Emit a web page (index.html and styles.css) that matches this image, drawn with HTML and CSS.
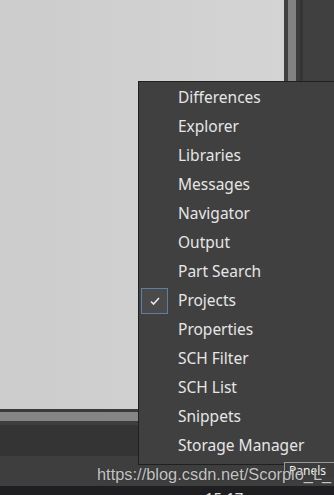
FILE: index.html
```html
<!DOCTYPE html>
<html lang="en">
<head>
    <meta charset="UTF-8">
    <title>Panels menu</title>
    <link rel="stylesheet" href="styles.css">
</head>
<body>
    <div class="screen">
        <div class="workspace">
            <div class="canvas"></div>
            <div class="strip">
                <span class="seg seg-a"></span>
                <span class="seg seg-b"></span>
                <span class="seg seg-c"></span>
                <span class="seg seg-d"></span>
                <span class="seg seg-e"></span>
            </div>
        </div>
        <div class="hscroll"></div>
        <div class="bar bar-a"></div>
        <div class="bar bar-b"></div>
        <div class="bar bar-c"></div>
        <div class="taskbar"><span class="clock">15:17</span></div>

        <ul class="menu">
            <li class="item">Differences</li>
            <li class="item">Explorer</li>
            <li class="item">Libraries</li>
            <li class="item">Messages</li>
            <li class="item">Navigator</li>
            <li class="item">Output</li>
            <li class="item">Part Search</li>
            <li class="item checked">
                <span class="check">
                    <svg width="12" height="10" viewBox="0 0 12 10"><path d="M2 5.5 L4.5 8 L10 2" fill="none" stroke="#e8e8e8" stroke-width="1.6"/></svg>
                </span>
                Projects
            </li>
            <li class="item">Properties</li>
            <li class="item">SCH Filter</li>
            <li class="item">SCH List</li>
            <li class="item">Snippets</li>
            <li class="item">Storage Manager</li>
        </ul>

        <div class="tooltip">Panels</div>
        <div class="watermark">https://blog.csdn.net/Scorpio_L_</div>
    </div>
</body>
</html>
```

FILE: styles.css
```css
body {
    margin: 0;
    background: #404040;
}

.screen {
    position: relative;
    width: 334px;
    height: 495px;
    overflow: hidden;
}

.workspace {
    display: flex;
    height: 409px;
}

.canvas {
    flex: 1;
    background: linear-gradient(to right, #cccccc, #d4d4d4);
}

.strip {
    display: flex;
    width: 50px;
}

.seg {
    display: block;
}

.seg-a { width: 4px; background: #404040; }
.seg-b { width: 8px; background: #828282; }
.seg-c { width: 4px; background: #3c3c3c; }
.seg-d { width: 3px; background: #353535; }
.seg-e { flex: 1; background: #404040; }

.hscroll {
    height: 3px;
    background: #3a3a3a;
}

.bar-a {
    height: 9px;
    background: #858585;
}

.bar-b {
    height: 31px;
    background: #343434;
    border-top: 4px solid #3e3e3e;
}

.bar-c {
    height: 30px;
    background: #3e3e3e;
}

.taskbar {
    height: 13px;
    background: #1f1f22;
    position: relative;
}

.clock {
    position: absolute;
    left: 205px;
    top: 3px;
    color: #e0e0e0;
    font-family: "Noto Sans", sans-serif;
    font-size: 15px;
    line-height: 16px;
}

.menu {
    position: absolute;
    left: 138px;
    top: 81px;
    width: 200px;
    margin: 0;
    padding: 1px 0 4px 0;
    list-style: none;
    background: #404040;
    border: 1px solid #202020;
    font-family: "Noto Sans", sans-serif;
    font-size: 15.5px;
    color: #e6e6e6;
}

.item {
    position: relative;
    height: 29px;
    line-height: 28px;
    padding-left: 39px;
}

.check {
    position: absolute;
    left: 2px;
    top: 2px;
    width: 25px;
    height: 24px;
    border: 1px solid #5d7fa3;
    background: #4a4a4a;
    display: flex;
    align-items: center;
    justify-content: center;
}

.watermark {
    position: absolute;
    left: 97px;
    top: 465px;
    color: #c4c4c4;
    font-family: "Liberation Sans", Arial, sans-serif;
    font-size: 16.4px;
    text-shadow: 0 0 1px #222;
}

.tooltip {
    position: absolute;
    left: 284px;
    top: 462px;
    width: 50px;
    height: 15px;
    padding-left: 4px;
    background: #3c3c3c;
    border-top: 1px solid #9a9a9a;
    border-left: 1px solid #9a9a9a;
    color: #f0f0f0;
    font-family: "Noto Sans", sans-serif;
    font-size: 12px;
    line-height: 15px;
}
```
